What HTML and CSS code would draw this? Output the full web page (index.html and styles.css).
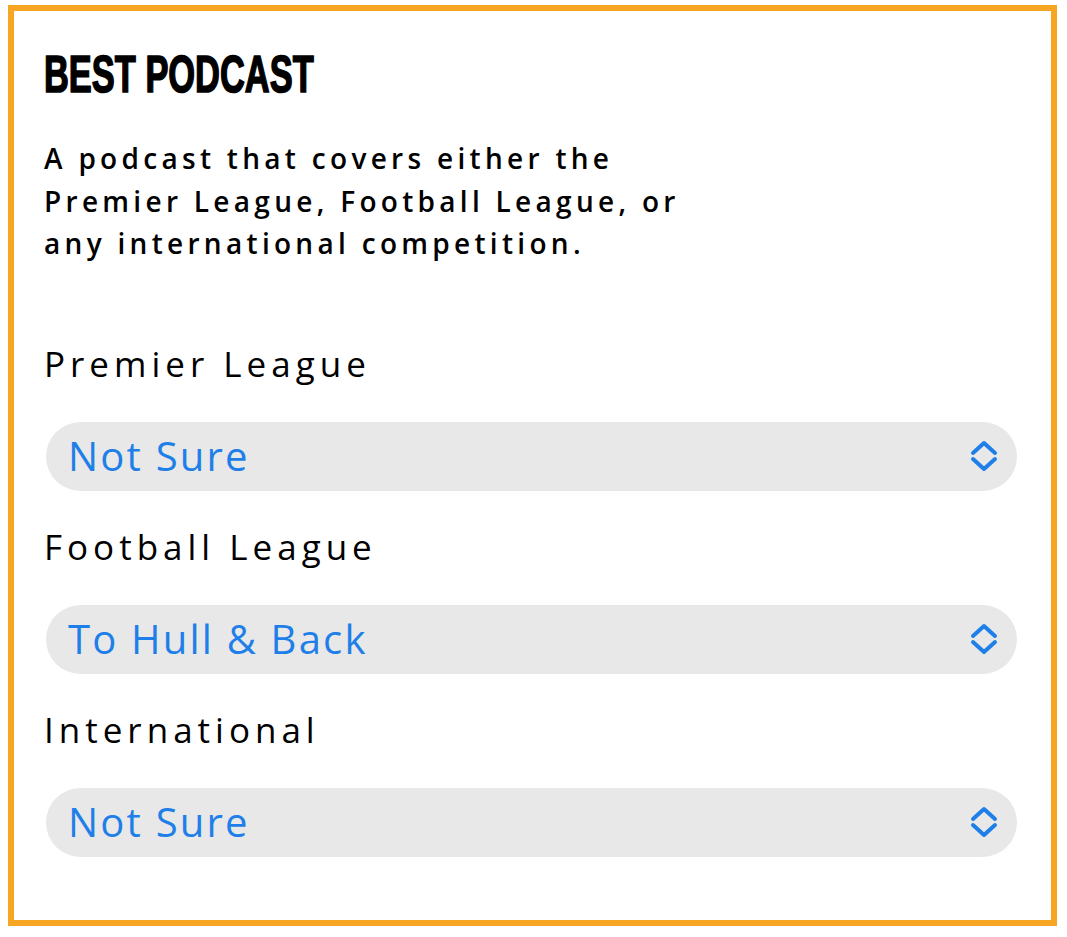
FILE: index.html
```html
<!DOCTYPE html>
<html lang="en">
<head>
<meta charset="utf-8">
<title>Best Podcast</title>
<link rel="stylesheet" href="styles.css">
</head>
<body>
<section class="card">
  <h1 class="title"><span class="title-text">BEST PODCAST</span></h1>
  <p class="desc">A podcast that covers either the<br>Premier League, Football League, or<br>any international competition.</p>
  <div class="field">
    <label class="label">Premier League</label>
    <div class="select"><span class="value">Not Sure</span>
      <svg class="chev" viewBox="0 0 28 32" width="28" height="32"><path d="M3 13 L14 3 L25 13 M3 19 L14 29 L25 19" fill="none" stroke="currentColor" stroke-width="4" stroke-linecap="round" stroke-linejoin="round"/></svg>
    </div>
  </div>
  <div class="field">
    <label class="label">Football League</label>
    <div class="select"><span class="value">To Hull &amp; Back</span>
      <svg class="chev" viewBox="0 0 28 32" width="28" height="32"><path d="M3 13 L14 3 L25 13 M3 19 L14 29 L25 19" fill="none" stroke="currentColor" stroke-width="4" stroke-linecap="round" stroke-linejoin="round"/></svg>
    </div>
  </div>
  <div class="field">
    <label class="label">International</label>
    <div class="select"><span class="value">Not Sure</span>
      <svg class="chev" viewBox="0 0 28 32" width="28" height="32"><path d="M3 13 L14 3 L25 13 M3 19 L14 29 L25 19" fill="none" stroke="currentColor" stroke-width="4" stroke-linecap="round" stroke-linejoin="round"/></svg>
    </div>
  </div>
</section>
</body>
</html>
```
FILE: styles.css
```css
html, body {
  margin: 0;
  padding: 0;
  background: #ffffff;
}
body {
  width: 1067px;
  height: 937px;
  overflow: hidden;
}
.card {
  box-sizing: border-box;
  margin: 5px 0 0 8px;
  width: 1049px;
  height: 921px;
  border: 6px solid #f6a623;
  padding: 38px 34px 0 30px;
  display: flex;
  flex-direction: column;
}
.title {
  margin: 0;
  height: 51px;
  font-family: "Liberation Sans Narrow", "Liberation Sans", sans-serif;
  font-weight: 700;
  font-size: 51px;
  line-height: 51px;
  color: #000;
  white-space: nowrap;
}
.title-text {
  display: inline-block;
  transform: scaleX(0.675);
  transform-origin: left center;
  -webkit-text-stroke: 1.6px #000;
}
.desc {
  margin: 37px 0 0 0;
  font-family: "Open Sans", sans-serif;
  font-weight: 600;
  font-size: 28px;
  line-height: 42.5px;
  letter-spacing: 4.3px;
  color: #000;
}
.field {
  display: flex;
  flex-direction: column;
}
.field:first-of-type {
  margin-top: 79px;
}
.field + .field {
  margin-top: 36px;
}
.label {
  height: 40px;
  font-family: "Open Sans", sans-serif;
  font-weight: 500;
  font-size: 35px;
  line-height: 40px;
  letter-spacing: 5px;
  color: #000;
}
.select {
  margin: 38px 0 0 2px;
  height: 69px;
  border-radius: 35px;
  background: #e8e8e8;
  display: flex;
  align-items: center;
  justify-content: space-between;
  padding: 0 19px 0 22px;
  color: #1f7fe8;
}
.value {
  font-family: "Open Sans", sans-serif;
  font-weight: 400;
  font-size: 40px;
  line-height: 40px;
  letter-spacing: 2.2px;
}
.chev {
  display: block;
}
```
